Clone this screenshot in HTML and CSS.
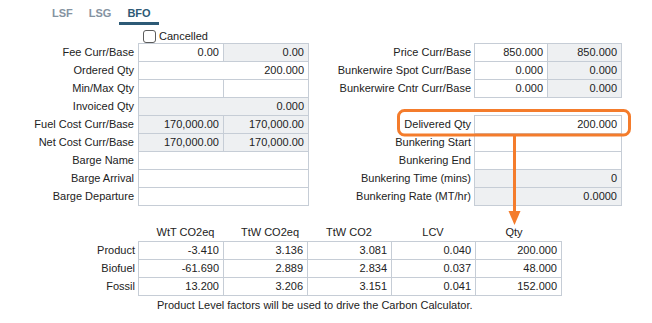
FILE: index.html
```html
<!DOCTYPE html>
<html lang="en">
<head>
<meta charset="utf-8">
<title>BFO</title>
<link rel="stylesheet" href="styles.css">
</head>
<body>
<div class="page">
  <nav class="tabs">
    <span class="tab">LSF</span><span class="tab">LSG</span><span class="tab active">BFO</span>
  </nav>

  <div class="check-row">
    <label class="check"><input type="checkbox"><span>Cancelled</span></label>
  </div>

  <div class="form">
    <div class="grid left">
      <div class="lbl">Fee Curr/Base</div>
      <div class="fld"><div class="c h">0.00</div><div class="c h ro">0.00</div></div>

      <div class="lbl">Ordered Qty</div>
      <div class="fld"><div class="c">200.000</div></div>

      <div class="lbl">Min/Max Qty</div>
      <div class="fld"><div class="c h"></div><div class="c h"></div></div>

      <div class="lbl">Invoiced Qty</div>
      <div class="fld"><div class="c ro">0.000</div></div>

      <div class="lbl">Fuel Cost Curr/Base</div>
      <div class="fld"><div class="c h ro">170,000.00</div><div class="c h ro">170,000.00</div></div>

      <div class="lbl">Net Cost Curr/Base</div>
      <div class="fld"><div class="c h ro">170,000.00</div><div class="c h ro">170,000.00</div></div>

      <div class="lbl">Barge Name</div>
      <div class="fld"><div class="c"></div></div>

      <div class="lbl">Barge Arrival</div>
      <div class="fld"><div class="c"></div></div>

      <div class="lbl">Barge Departure</div>
      <div class="fld"><div class="c"></div></div>
    </div>

    <div class="grid right">
      <div class="lbl">Price Curr/Base</div>
      <div class="fld"><div class="c h">850.000</div><div class="c h ro">850.000</div></div>

      <div class="lbl">Bunkerwire Spot Curr/Base</div>
      <div class="fld"><div class="c h">0.000</div><div class="c h ro">0.000</div></div>

      <div class="lbl">Bunkerwire Cntr Curr/Base</div>
      <div class="fld"><div class="c h">0.000</div><div class="c h ro">0.000</div></div>

      <div class="gap"></div>

      <div class="lbl">Delivered Qty</div>
      <div class="fld"><div class="c">200.000</div></div>

      <div class="lbl">Bunkering Start</div>
      <div class="fld"><div class="c"></div></div>

      <div class="lbl">Bunkering End</div>
      <div class="fld"><div class="c"></div></div>

      <div class="lbl">Bunkering Time (mins)</div>
      <div class="fld"><div class="c ro">0</div></div>

      <div class="lbl">Bunkering Rate (MT/hr)</div>
      <div class="fld"><div class="c ro">0.0000</div></div>
    </div>
  </div>

  <div class="carbon">
    <div class="hd"></div>
    <div class="hd hd-r">WtT CO2eq</div>
    <div class="hd hd-r">TtW CO2eq</div>
    <div class="hd">TtW CO2</div>
    <div class="hd">LCV</div>
    <div class="hd hd-l">Qty</div>

    <div class="rl">Product</div>
    <div class="cc">-3.410</div><div class="cc">3.136</div><div class="cc">3.081</div><div class="cc">0.040</div><div class="cc">200.000</div>

    <div class="rl">Biofuel</div>
    <div class="cc">-61.690</div><div class="cc">2.889</div><div class="cc">2.834</div><div class="cc">0.037</div><div class="cc">48.000</div>

    <div class="rl">Fossil</div>
    <div class="cc">13.200</div><div class="cc">3.206</div><div class="cc">3.151</div><div class="cc">0.041</div><div class="cc">152.000</div>
  </div>

  <p class="note">Product Level factors will be used to drive the Carbon Calculator.</p>

  <svg class="callout" width="652" height="323" viewBox="0 0 652 323" aria-hidden="true">
    <rect x="398.5" y="110.5" width="231" height="24.5" rx="6" fill="none" stroke="#f47c2c" stroke-width="3"/>
    <line x1="514.5" y1="136" x2="514.5" y2="214" stroke="#f47c2c" stroke-width="3"/>
    <path d="M508.5 211 L520.5 211 L514.5 225 Z" fill="#f47c2c"/>
  </svg>
</div>
</body>
</html>
```

FILE: styles.css
```css
* { box-sizing: border-box; }

html, body {
  margin: 0;
  background: #ffffff;
}

body {
  font-family: "Liberation Sans", Arial, sans-serif;
  font-size: 11px;
  color: #222222;
}

.page {
  position: relative;
  width: 652px;
  height: 323px;
  overflow: hidden;
}

/* Tabs */
.tabs {
  display: flex;
  padding-left: 44px;
  height: 25px;
}

.tab {
  padding: 5px 8px 1px;
  line-height: 16px;
  font-weight: bold;
  color: #8593a1;
  border-bottom: 3px solid transparent;
}

.tab.active {
  color: #2d5a76;
  border-bottom-color: #2d5a76;
}

/* Checkbox row */
.check-row {
  margin-top: 5px;
  height: 13px;
  padding-left: 143px;
  display: flex;
  align-items: center;
}

.check {
  display: flex;
  align-items: center;
  line-height: 13px;
}

.check input {
  appearance: none;
  -webkit-appearance: none;
  width: 13px;
  height: 13px;
  margin: 0 3px 0 0;
  border: 1px solid #5c5c5c;
  border-radius: 3px;
  background: #ffffff;
}

/* Field grids */
.form {
  display: flex;
}

.grid {
  display: grid;
  grid-auto-rows: 18px;
}

.left { grid-template-columns: 138px 171px; }
.right { grid-template-columns: 165px 148px; }

.lbl {
  text-align: right;
  padding: 1px 4px 0 0;
  line-height: 17px;
  white-space: nowrap;
}

.right .lbl { padding-right: 3px; }

.gap { grid-column: 1 / -1; }

.fld {
  display: flex;
  height: 19px;
}

.c {
  flex: 1 1 auto;
  height: 19px;
  border: 1px solid #c6cdd6;
  background: #ffffff;
  text-align: right;
  padding-right: 4px;
  line-height: 17px;
  white-space: nowrap;
}

.c + .c { margin-left: -1px; }

.left .c.h { flex: 0 0 86px; }
.right .c.h:first-child { flex: 0 0 74px; }
.right .c.h + .c.h { flex: 0 0 75px; }

.ro { background: #eef0f2; }

/* Carbon table */
.carbon {
  display: grid;
  grid-template-columns: 138px 85px 84px 84px 84px 86px;
  grid-auto-rows: 18px;
  margin-top: 18px;
}

.hd {
  text-align: center;
  line-height: 18px;
  white-space: nowrap;
}

.hd-r { padding-left: 10px; }
.hd-l { padding-right: 8px; }

.rl {
  text-align: right;
  padding: 1px 3px 0 0;
  line-height: 17px;
}

.cc {
  width: calc(100% + 1px);
  height: 19px;
  border: 1px solid #c6cdd6;
  background: #ffffff;
  text-align: right;
  padding-right: 4px;
  line-height: 17px;
}

.note {
  margin: 2px 0 0;
  padding-left: 157px;
  line-height: 16px;
}

/* Annotation overlay */
.callout {
  position: absolute;
  left: 0;
  top: 0;
  pointer-events: none;
}
```
